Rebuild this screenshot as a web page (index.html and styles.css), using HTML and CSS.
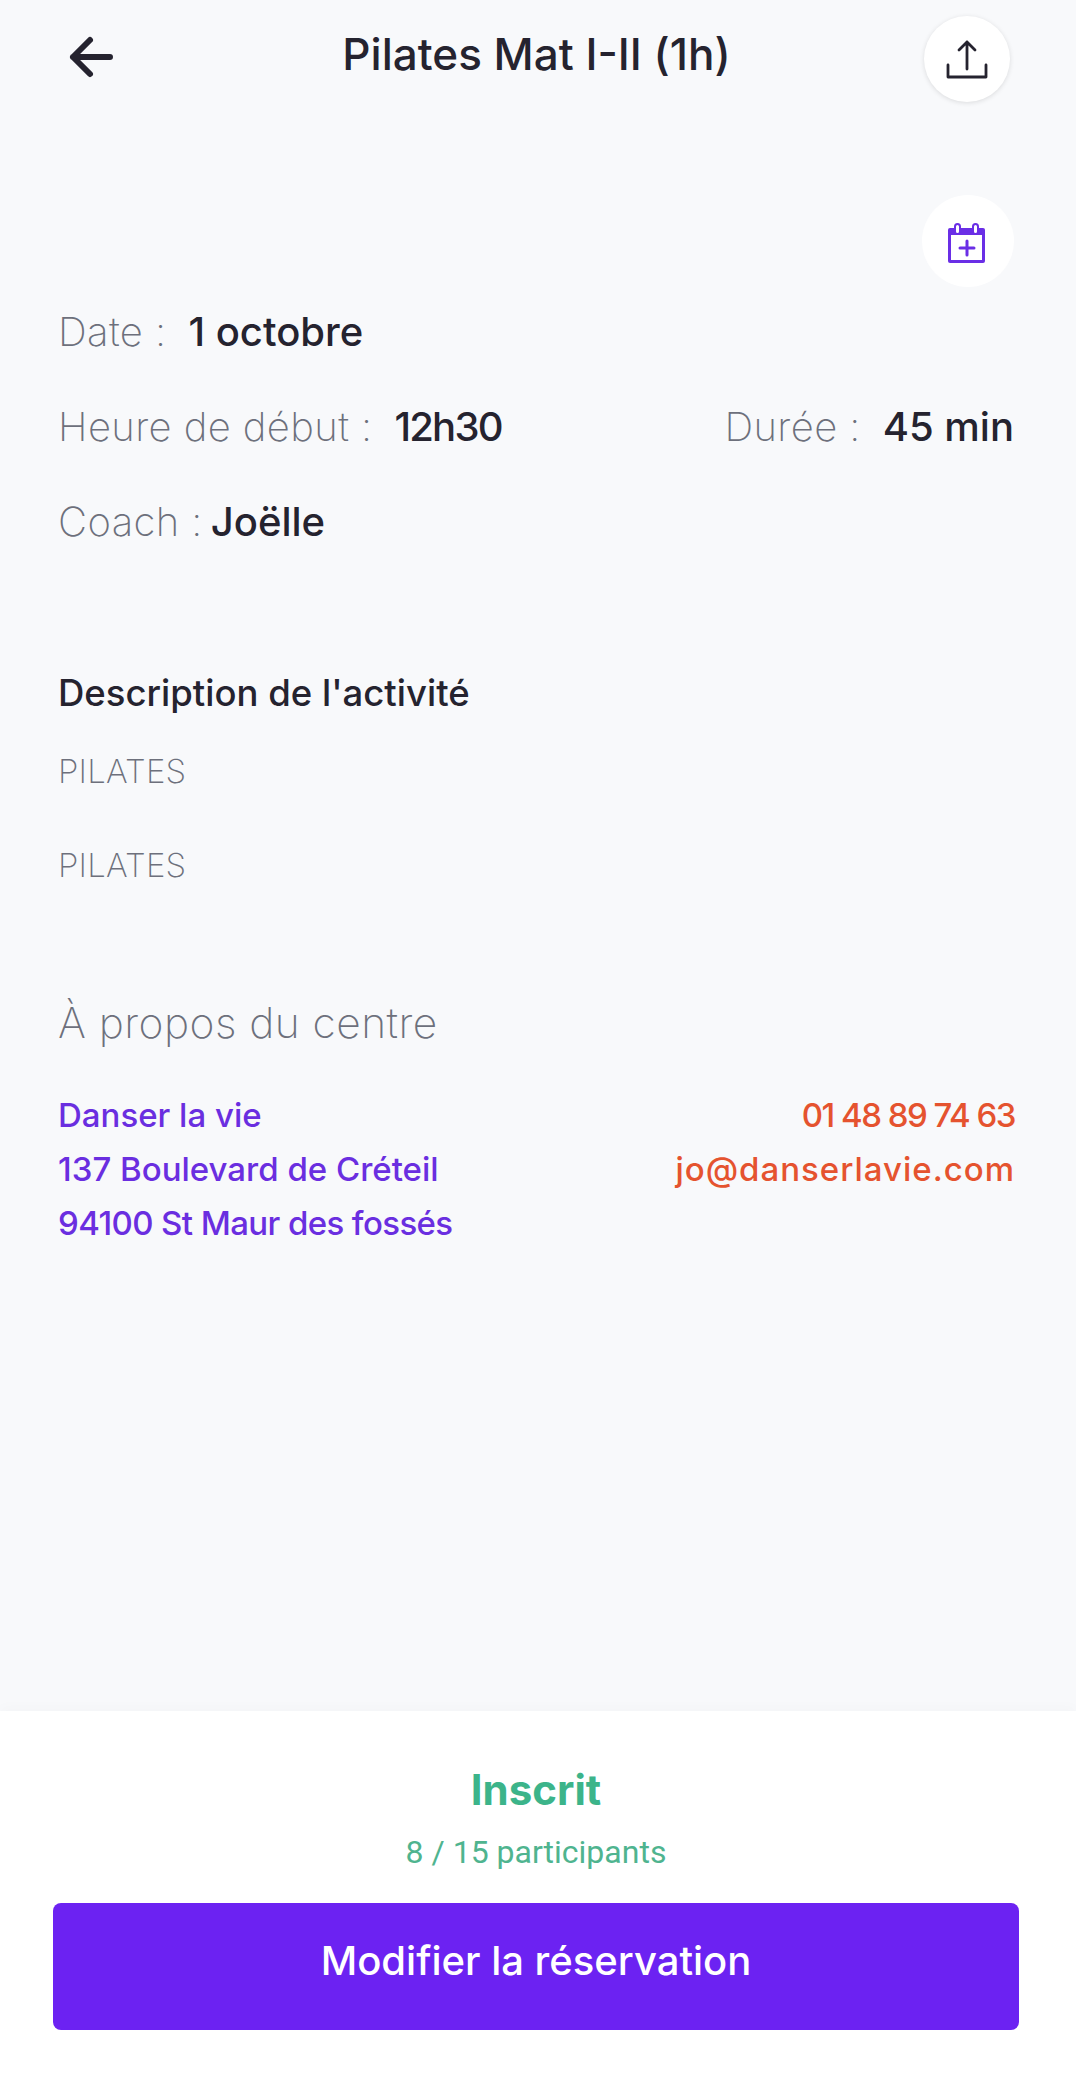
FILE: index.html
```html
<!DOCTYPE html>
<html lang="fr">
<head>
    <meta charset="UTF-8">
    <meta name="viewport" content="width=device-width, initial-scale=1.0">
    <title>Pilates Mat I-II (1h)</title>
    <link rel="stylesheet" href="styles.css">
</head>
<body>
    <div class="page">
        <div class="header">
            <svg class="back" width="50" height="50" viewBox="0 0 50 50">
                <path d="M45 25H8M25 8L8 25L25 42" fill="none" stroke="#25232f" stroke-width="6" stroke-linecap="round" stroke-linejoin="round"/>
            </svg>
            <h1 class="title">Pilates Mat I-II (1h)</h1>
            <div class="round-btn share">
                <svg width="46" height="44" viewBox="0 0 46 44">
                    <path d="M23 32V5M15 13L23 5L31 13M4 28V40H42V28" fill="none" stroke="#25232f" stroke-width="2.800" stroke-linecap="round" stroke-linejoin="round"/>
                </svg>
            </div>
        </div>

        <div class="content">
            <div class="cal-row">
                <div class="round-btn cal">
                    <svg width="40" height="44" viewBox="0 0 40 44">
                        <path d="M2 9H35Q37 9 37 11V42Q37 44 35 44H2Q0 44 0 42V11Q0 9 2 9Z" fill="#6a2ee6"/>
                        <rect x="3" y="16" width="31" height="25" fill="#fff"/>
                        <rect x="7" y="5" width="5" height="10" rx="2.500" fill="#fff" stroke="#6a2ee6" stroke-width="2"/>
                        <rect x="25" y="5" width="5" height="10" rx="2.500" fill="#fff" stroke="#6a2ee6" stroke-width="2"/>
                        <path d="M19 22V36M12 29H26" fill="none" stroke="#6a2ee6" stroke-width="3" stroke-linecap="round"/>
                    </svg>
                </div>
            </div>

            <div class="info-row">
                <span class="label">Date :</span><b class="value">1 octobre</b>
            </div>
            <div class="info-row split">
                <div><span class="label">Heure de début :</span><b class="value digits">12h30</b></div>
                <div><span class="label">Durée :</span><b class="value">45 min</b></div>
            </div>
            <div class="info-row">
                <span class="label">Coach :</span><b class="value tight">Joëlle</b>
            </div>

            <h2 class="desc-title">Description de l'activité</h2>
            <p class="desc">PILATES</p>
            <p class="desc">PILATES</p>

            <h2 class="about-title">À propos du centre</h2>
            <div class="about">
                <div class="address">
                    <div>Danser la vie</div>
                    <div>137 Boulevard de Créteil</div>
                    <div class="zip">94100 St Maur des fossés</div>
                </div>
                <div class="contact">
                    <div class="phone">01 48 89 74 63</div>
                    <div class="mail">jo@danserlavie.com</div>
                </div>
            </div>
        </div>

        <div class="footer">
            <div class="status">Inscrit</div>
            <div class="count">8 / 15 participants</div>
            <button class="book-btn" type="button">Modifier la réservation</button>
        </div>
    </div>
</body>
</html>
```

FILE: styles.css
```css
body {
    margin: 0;
    background-color: #f8f9fb;
    font-family: Inter, "Open Sans", sans-serif;
    color: #25232f;
}

.page {
    height: 2097px;
    display: flex;
    flex-direction: column;
    overflow: hidden;
}

.header {
    display: flex;
    align-items: center;
    justify-content: space-between;
    padding: 16px 66px 0 65px;
    height: 86px;
}

.back {
    margin-bottom: 4px;
}

.title {
    margin: 0 0 11px 0;
    padding-left: 34px;
    flex: 1;
    font-size: 44px;
    font-weight: 500;
    line-height: 76px;
    text-align: center;
}

.round-btn {
    display: flex;
    align-items: center;
    justify-content: center;
    border-radius: 50%;
    background-color: white;
}

.share {
    width: 86px;
    height: 86px;
    box-shadow: 0 1px 5px rgba(0, 0, 0, 0.12);
}

.cal {
    width: 92px;
    height: 92px;
}

.content {
    flex: 1;
    padding: 0 62px 0 58px;
}

.cal-row {
    display: flex;
    justify-content: flex-end;
    margin-top: 93px;
    margin-bottom: 21px;
}

.info-row {
    height: 95px;
    font-size: 40px;
    line-height: 48px;
    white-space: nowrap;
}

.info-row.split {
    display: flex;
    justify-content: space-between;
}

.label {
    font-weight: 200;
    letter-spacing: 0.400px;
    color: #6d707c;
}

.value {
    font-weight: 500;
    margin-left: 22px;
}

.value.tight {
    margin-left: 8px;
}

.value.digits {
    letter-spacing: -1.800px;
}

.desc-title {
    margin: 76px 0 0 0;
    font-size: 36.500px;
    font-weight: 500;
    line-height: 48px;
}

.desc {
    margin: 32px 0 0 0;
    font-size: 33px;
    font-weight: 200;
    line-height: 44px;
    letter-spacing: 0.200px;
    color: #6d707c;
}

.desc + .desc {
    margin-top: 50px;
}

.about-title {
    margin: 110px 0 0 0;
    font-size: 42.500px;
    font-weight: 200;
    line-height: 52px;
    letter-spacing: 0.450px;
    color: #6d707c;
}

.about {
    display: flex;
    justify-content: space-between;
    margin-top: 39px;
    margin-right: -1px;
    font-size: 33px;
    font-weight: 500;
    line-height: 54px;
}

.address {
    color: #6a2ee0;
}

.zip {
    letter-spacing: -0.600px;
}

.contact {
    color: #e5532f;
    text-align: right;
}

.phone {
    letter-spacing: -1.500px;
}

.mail {
    letter-spacing: 1px;
}

.footer {
    height: 386px;
    box-sizing: border-box;
    background-color: white;
    padding: 55px 57px 0 53px;
    text-align: center;
    box-shadow: 0 -4px 12px rgba(0, 0, 0, 0.02);
}

.status {
    font-size: 42px;
    font-weight: 700;
    line-height: 48px;
    color: #3cb48a;
}

.count {
    margin-top: 18px;
    font-family: Roboto, sans-serif;
    font-size: 32px;
    line-height: 40px;
    color: #4fb48f;
}

.book-btn {
    display: block;
    width: 100%;
    height: 127px;
    margin-top: 31px;
    padding: 0 0 12px 0;
    border: none;
    border-radius: 8px;
    background-color: #6c22f2;
    color: white;
    font-family: Inter, sans-serif;
    font-size: 40px;
    font-weight: 500;
}
```
